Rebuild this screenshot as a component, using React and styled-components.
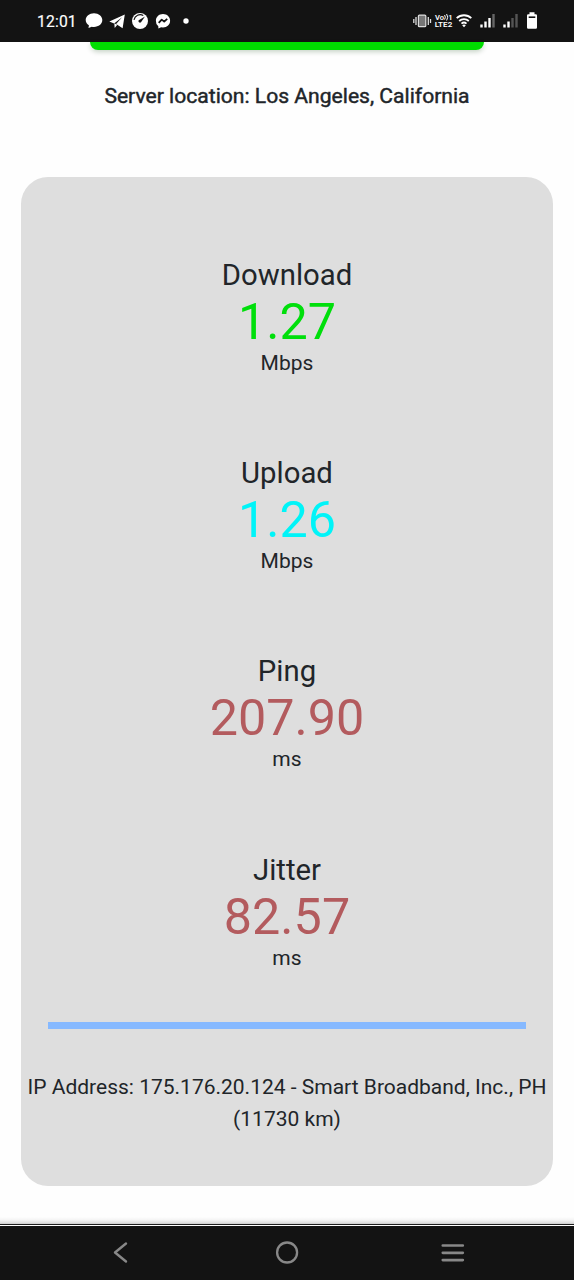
import React from "react";
import styled, { createGlobalStyle } from "styled-components";

const GlobalStyle = createGlobalStyle`
  * { box-sizing: border-box; }
  body { margin: 0; background: #fff; font-family: Roboto, "Liberation Sans", sans-serif; color: #212529; }
`;

const Screen = styled.div`
  width: 574px;
  height: 1280px;
  display: flex;
  flex-direction: column;
  overflow: hidden;
  background: #fefefe;
`;

const StatusBar = styled.header`
  flex: none;
  height: 42px;
  padding: 0 36px 0 37px;
  display: flex;
  align-items: center;
  justify-content: space-between;
  background: #131313;
  color: #fff;
`;

const Clock = styled.span`
  width: 48px;
  padding-top: 2px;
  font-size: 15.7px;
  line-height: 20px;
  letter-spacing: 0.15px;
  -webkit-text-stroke: 0.15px #fff;
`;

const StatusGroup = styled.div`
  display: flex;
  align-items: center;
  height: 42px;
`;

const Icons = styled.svg`
  display: block;
  flex: none;
`;

const Page = styled.main`
  flex: 1;
  display: flex;
  flex-direction: column;
  align-items: center;
`;

const StartButton = styled.div`
  width: 394px;
  height: 8px;
  background: #00dd00;
  border-radius: 0 0 10px 10px;
  box-shadow: 0 2px 5px rgba(0, 60, 0, 0.22);
`;

const Server = styled.p`
  margin: 30px 0 0;
  font-size: 21.1px;
  line-height: 32px;
  -webkit-text-stroke: 0.45px #212529;
`;

const Panel = styled.section`
  width: 532px;
  height: 1009px;
  margin-top: 65px;
  padding-top: 80px;
  display: flex;
  flex-direction: column;
  align-items: center;
  background: #dedede;
  border-radius: 27px;
`;

const Metric = styled.div`
  height: 198.2px;
  flex: none;
  text-align: center;
`;

const MetricName = styled.div`
  font-size: 29.3px;
  line-height: 36px;
`;

const MetricValue = styled.div`
  padding-bottom: 1px;
  font-size: 50.3px;
  line-height: 57px;
  color: ${(p) => p.$color};
`;

const MetricUnit = styled.div`
  font-size: 21px;
  line-height: 25px;
`;

const Progress = styled.div`
  flex: none;
  width: 478px;
  height: 7px;
  margin-top: -28px;
  background: #86b9ff;
`;

const Address = styled.p`
  margin: 42px 0 0;
  font-size: 21px;
  line-height: 32px;
  text-align: center;
  white-space: nowrap;
`;

const NavEdge = styled.div`
  flex: none;
  height: 9px;
  background: linear-gradient(#fefefe 0, #f4f4f4 3px, #dedede 6px, #c9c9c9 7px, #1e1e1e 7px, #1e1e1e 8px, #fff 8px);
`;

const NavBar = styled.nav`
  flex: none;
  height: 54px;
  padding: 0 109px 0 108px;
  display: flex;
  align-items: center;
  justify-content: space-between;
  background: #131313;
`;

const metrics = [
  { name: "Download", value: "1.27", unit: "Mbps", color: "#00df0b" },
  { name: "Upload", value: "1.26", unit: "Mbps", color: "#00f4f8" },
  { name: "Ping", value: "207.90", unit: "ms", color: "#b35b5e" },
  { name: "Jitter", value: "82.57", unit: "ms", color: "#b35b5e" },
];

function Notifications() {
  return (
    <Icons width="106" height="42" viewBox="85 0 106 42" fill="#fff">
      <path d="M94 13.2c4.700 0 8.300 3 8.300 6.900s-3.600 6.900-8.300 6.900c-.8 0-1.500-.1-2.200-.3L88.500 28l.4-2.700c-2-1.200-3.200-3-3.200-5.200 0-3.900 3.600-6.900 8.300-6.900z" />
      <path d="M124.800 14.600 109.300 21.500l4.800 2 8-6.300-6 6.700 6.500 4.300z" />
      <path d="m114.300 23.300.4 4.800 2.600-3.300z" />
      <circle cx="140" cy="21" r="8" />
      <path d="M134 19.800a6.300 6.300 0 0 1 9.300-4.300" fill="none" stroke="#131313" strokeWidth="1.200" />
      <path d="M145 16.500 141 22.200a1.500 1.500 0 0 1-2.300-1.900z" fill="#131313" />
      <path d="M163 14c4.100 0 7.100 2.900 7.100 6.700s-3 6.700-7.100 6.700l-1.900-.2-2.700 1.300-.1-2.300a6.600 6.600 0 0 1-2.400-5.500c0-3.800 3-6.700 7.100-6.700z" />
      <path d="m158.700 22.800 3-3.200 2.500 2 3-2.700" fill="none" stroke="#131313" strokeWidth="1.800" strokeLinejoin="round" />
      <circle cx="186" cy="21" r="2.700" />
    </Icons>
  );
}

function SystemIcons() {
  return (
    <Icons width="125" height="42" viewBox="413 0 125 42" fill="#fff">
      <rect x="418.400" y="15.100" width="7.400" height="11.600" rx="1" fill="#777" stroke="#ddd" strokeWidth="1.200" />
      <path d="M416 17v8M428.300 17v8M413.800 19v4M430.500 19v4" fill="none" stroke="#ddd" strokeWidth="1.300" />
      <g fontFamily="Roboto, sans-serif" fontWeight="600">
        <text x="435" y="19.800" fontSize="7.600" textLength="9" lengthAdjust="spacingAndGlyphs">Vo</text>
        <text x="448.200" y="19.600" fontSize="7.600">1</text>
        <text x="434.700" y="27.400" fontSize="7.600" textLength="17.600" lengthAdjust="spacingAndGlyphs">LTE2</text>
      </g>
      <path d="M444.600 15q1.500 2.300 0 4.600M446.600 14q2.200 3.300 0 6.500" fill="none" stroke="#fff" strokeWidth="1" />
      <g fill="none" stroke="#fff" strokeWidth="1.800">
        <path d="M456.700 18.200a10.500 10.500 0 0 1 14.600 0" />
        <path d="M459.200 21a7 7 0 0 1 9.600 0" />
        <path d="M461.500 23.600a3.700 3.700 0 0 1 5 0" />
      </g>
      <path d="m464 27.200-1.800-2a2.700 2.700 0 0 1 3.600 0z" />
      <path d="M480.300 24.500h2.400v3h-2.400zM484.300 21.500h2.400v6h-2.400zM488.300 18h2.400v9.500h-2.400z" />
      <path d="M492.300 14h2.400v13.500h-2.400z" fill="#666" />
      <path d="M503.300 24.500h2.400v3h-2.400zM507.300 21.500h2.400v6h-2.400z" />
      <path d="M511.300 18h2.400v9.500h-2.400zM515.300 14h2.400v13.500h-2.400z" fill="#555" />
      <path d="M529.500 12.300h5v2h1.300q1.200 0 1.200 1.200v12q0 1.200-1.200 1.200h-7.600q-1.200 0-1.200-1.200v-12q0-1.200 1.200-1.200h1.300z" />
      <path d="M528.700 16.400h6.600v1.600h-6.600z" fill="#131313" />
    </Icons>
  );
}

export default function App() {
  return (
    <Screen>
      <GlobalStyle />
      <StatusBar>
        <StatusGroup>
          <Clock>12:01</Clock>
          <Notifications />
        </StatusGroup>
        <SystemIcons />
      </StatusBar>
      <Page>
        <StartButton />
        <Server>Server location: Los Angeles, California</Server>
        <Panel>
          {metrics.map((m) => (
            <Metric key={m.name}>
              <MetricName>{m.name}</MetricName>
              <MetricValue $color={m.color}>{m.value}</MetricValue>
              <MetricUnit>{m.unit}</MetricUnit>
            </Metric>
          ))}
          <Progress />
          <Address>
            IP Address: 175.176.20.124 - Smart Broadband, Inc., PH
            <br />
            (11730 km)
          </Address>
        </Panel>
      </Page>
      <NavEdge />
      <NavBar>
        <Icons width="24" height="24" viewBox="0 0 24 24" fill="none" stroke="#888" strokeWidth="2.400" strokeLinecap="round" strokeLinejoin="round">
          <path d="M18 2.500 7 11.500 18 20.500" />
        </Icons>
        <Icons width="24" height="24" viewBox="0 0 24 24" fill="none" stroke="#888" strokeWidth="2.300">
          <circle cx="12.100" cy="11.500" r="10" />
        </Icons>
        <Icons width="24" height="24" viewBox="0 0 24 24" fill="none" stroke="#888" strokeWidth="2.700" strokeLinecap="round">
          <path d="M1.800 4.500h20M1.800 11.800h20M1.800 19.100h20" />
        </Icons>
      </NavBar>
    </Screen>
  );
}
